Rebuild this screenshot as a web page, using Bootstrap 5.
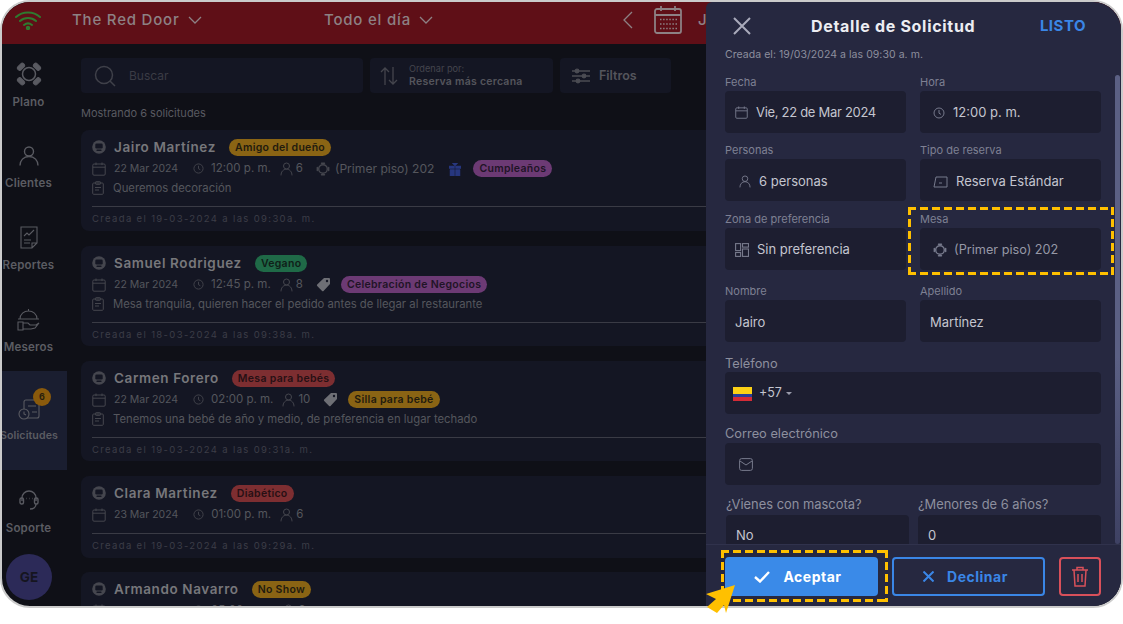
<!DOCTYPE html>
<html lang="es">
<head>
<meta charset="utf-8">
<title>Detalle de Solicitud</title>
<link href="https://cdn.jsdelivr.net/npm/bootstrap@5.3.0/dist/css/bootstrap.min.css" rel="stylesheet">
<style>
html,body{margin:0;background:#fff;font-family:Inter,"Noto Sans",sans-serif;overflow:hidden}
.stage{position:relative;width:1123px;height:624px}
.frame{width:1123px;height:608px;border:2px solid #cbcbcb;border-radius:30px;overflow:hidden;position:relative;background:#0f1017}
.topbar{height:42px;background:#5f0f17;color:#8d8184;font-size:15px;font-weight:500;letter-spacing:.8px;padding-bottom:6px}
.tb-wifi{margin-left:13px;width:57px}
.tb-venue{width:252px}
.tb-when{width:299px}
.tb-cal{margin:0 16px 0 21px}
.shell{height:562px}
.side{width:65px;flex:none}
.side-item{height:81.75px;gap:8px;color:#5b5c62;font-size:11.5px;font-weight:600;letter-spacing:.2px;line-height:14px;position:relative;padding-right:12px}
.side-item svg{color:#595a61}
.side-wide{gap:10px;padding-top:2px}
.side-low{gap:9px;padding-top:2px}
.side-sup{gap:11px;padding-top:2px}
.side-item.is-on{height:99px;background:#1a1e30;white-space:nowrap;padding-right:11px}
.side-item.is-on span.lbl{font-size:10.6px;letter-spacing:.1px}
.side-count{position:absolute;left:31px;top:17px;width:18px;height:18px;border-radius:50%;background:#8a5a0c;color:#2a1f0c;font-size:9px;font-weight:700;line-height:18px;text-align:center}
.avatar{width:46px;height:46px;border-radius:50%;background:#2c2a58;color:#15151f;font-size:13.5px;font-weight:700;margin:2px 0 0 4px}
.main{width:900px;flex:none;padding:14px 0 0 14px;overflow:hidden}
.tool{height:35px;background:#141623;border-radius:4px;color:#54555c;padding-top:1px}
.tool-search{width:282px;padding-left:13px;gap:13px;font-size:12px;color:#3b3c45}
.tool-sort{width:183px;margin-left:7px;padding-left:10px;gap:7px}
.tool-filter{width:111px;margin-left:7px;padding-left:12px;gap:9px;font-size:12.5px;font-weight:600}
.sort-a{font-size:9.2px;line-height:11px;color:#44454d}
.sort-b{font-size:10.5px;line-height:14px;margin-top:1px;font-weight:600;letter-spacing:.25px}
.count-line{font-size:11px;line-height:14px;color:#595a61;margin:13px 0 10px}
.req{width:760px;background:#141623;border-radius:8px;padding:9px 11px 0;margin-bottom:15px}
.req-a{height:101px}.req-b{height:100px}.req-c{height:82px;margin-bottom:14px}.req-d{height:60px}
.req-row{gap:8px;height:16px}
.req-name{font-size:13.5px;line-height:16px;font-weight:600;color:#77777b;letter-spacing:.6px;margin-right:5px}
.pill{font-size:10.5px;line-height:17px;height:17px;border-radius:9px;padding:0 6px;font-weight:600;letter-spacing:.3px;white-space:nowrap}
.pill-amber{background:#8a6414;color:#221b0e}
.pill-green{background:#1f6a47;color:#0f2018}
.pill-purple{background:#6c3a74;color:#1f1426}
.pill-red{background:#7d2e31;color:#271014}
.req-info{height:17px;margin-top:5px;font-size:11px;color:#55565d;line-height:17px;white-space:nowrap}
.req-info svg,.req-note svg{color:#45464e;flex:none}
.req-date{margin:0 15px 0 8px;font-size:10.5px}
.req-time{margin:0 9px 0 7px;font-size:11.5px}
.req-ppl{margin:0 13px 0 3px;font-size:11.5px}
.req-tbl{margin:0 15px 0 5px;font-size:12.1px}
.req-tagi{margin-right:10px;color:#6e6f75!important}
.req-note{height:14px;margin-top:4px;gap:9px;font-size:11.3px;line-height:14px;color:#55565d;white-space:nowrap}
.req-line{border-top:1px solid #3a3b45;margin-top:11px;padding-top:5px;font-size:9.5px;letter-spacing:1.35px;color:#3c3d47;line-height:13px}
.req-c .req-line{margin-top:10px}
.drawer{position:absolute;left:704px;top:0;right:0;bottom:0;background:#262840;border-top-left-radius:6px}
.dw-head{height:42px;padding:6px 35px 0 27px}
.dw-title{font-size:16px;font-weight:700;color:#eceDf2;letter-spacing:.7px;margin-left:60px}
.dw-done{font-size:15px;font-weight:700;color:#3a86e6;letter-spacing:.5px}
.dw-body{height:500px;padding:4px 20px 0 19px;overflow:hidden}
.dw-created{font-size:10.5px;line-height:14px;color:#8d8f9e;letter-spacing:.05px}
.dw-grid{display:grid;grid-template-columns:181px 181px;column-gap:14px}
.dw-label{font-size:11px;line-height:14px;color:#7e8093;margin-bottom:2px}
.gap-r1{margin-top:13px}.gap-r2{margin-top:10px}.gap-r3{margin-top:11px}.gap-r4{margin-top:14px}.gap-r5{margin-top:15px}.gap-r6{margin-top:13px}.gap-r7{margin-top:13px}
.lab-big{font-size:12.8px;color:#8d8f9e}
.lab-tel{margin-bottom:1px}
.dw-field{height:42px;background:#1d1e30;border-radius:4px;padding:1px 0 0 10px;font-size:13px;color:#c4c5cf;white-space:nowrap}
.dw-field svg{color:#777a8c;flex:none}
.dw-inset{padding-left:13px}
.dw-low{padding-top:3px}
.dw-tight{letter-spacing:-.3px}
.dw-muted{font-size:12.7px;color:#9698a6;gap:7px!important}
.flag{width:19px;height:14px;margin-left:-2px;margin-right:7px;background:linear-gradient(#fcd116 0 50%,#2a3e9a 50% 75%,#d52b36 75%)}
.caret-mini{width:0;height:0;border:3px solid transparent;border-top-color:#9a9bab;border-bottom:0;margin-left:4px}
.code-dial{font-size:12.5px}
.tail-grid{display:grid;grid-template-columns:183px 183px;column-gap:9px;margin-left:1px}
.tail-grid .dw-label{margin-bottom:3px;font-size:12.9px;color:#8d8f9e}
.tail-grid .dw-field{padding-top:0;padding-bottom:1px}
.dw-foot{position:absolute;left:0;right:0;bottom:0;height:62px;background:#262840;border-top:1px solid #30324c;padding:12px 20px 0 19px}
.act{height:39px;border-radius:4px;font-size:14px;font-weight:700;gap:13px;letter-spacing:.5px}
.act-ok{width:153px;background:#3a8ae8;color:#fff;padding-right:7px!important}
.act-no{width:153px;margin-left:14px;border:2px solid #3a86e6;color:#3a86e6;background:transparent;padding-right:6px!important}
.act-del{width:42px;margin-left:14px;border:2px solid #d8505a;color:#d8505a;background:transparent}
.dw-scroll{position:absolute;right:1px;top:73px;width:5px;height:469px;border-radius:3px;background:linear-gradient(#5b6084 0 60%,#3e4163)}
.mark-dash{position:absolute;pointer-events:none;
  background:
   repeating-linear-gradient(90deg,#ffc000 0 8px,transparent 8px 12px) left top/100% 3px no-repeat,
   repeating-linear-gradient(90deg,#ffc000 0 8px,transparent 8px 12px) left bottom/100% 3px no-repeat,
   repeating-linear-gradient(180deg,#ffc000 0 8px,transparent 8px 12px) left top/3px 100% no-repeat,
   repeating-linear-gradient(180deg,#ffc000 0 8px,transparent 8px 12px) right top/3px 100% no-repeat}
.mark-table{left:908px;top:207px;width:206px;height:68px}
.mark-accept{left:721px;top:550px;width:167px;height:52px}
.pointer{position:absolute;left:705px;top:584px}
</style>
</head>
<body>
<svg width="0" height="0" class="position-absolute">
<defs>
<symbol id="i-cal" viewBox="0 0 14 14"><g fill="none" stroke="currentColor" stroke-width="1"><rect x=".8" y="2" width="12.4" height="11.2" rx="1.2"/><path d="M.8 5.2h12.4M4 .5v2.6M10 .5v2.6"/></g></symbol>
<symbol id="i-clock" viewBox="0 0 12 12"><g fill="none" stroke="currentColor" stroke-width="1"><circle cx="6" cy="6" r="5"/><path d="M6 3v3.2l2 1.2"/></g></symbol>
<symbol id="i-user" viewBox="0 0 13 14"><g fill="none" stroke="currentColor" stroke-width="1"><circle cx="6.5" cy="4" r="3"/><path d="M1 13.4c0-3.6 2.2-6.2 5.5-6.2s5.500 2.600 5.500 6.200"/></g></symbol>
<symbol id="i-tbl" viewBox="0 0 14 14"><g fill="none" stroke="currentColor" stroke-width="1.400"><circle cx="7" cy="7" r="4.300"/><path d="M5.500 1.300h3M5.500 12.700h3M1.300 5.500v3M12.700 5.500v3" stroke-linecap="round"/></g></symbol>
<symbol id="i-note" viewBox="0 0 12 14"><g fill="none" stroke="currentColor" stroke-width="1"><rect x=".7" y="2" width="10.600" height="11.300" rx="1"/><rect x="3.500" y=".7" width="5" height="2.600" rx=".6"/><path d="M3 6.500h6M3 9h4"/></g></symbol>
<symbol id="i-bus" viewBox="0 0 14 14"><circle cx="7" cy="7" r="6.800" fill="currentColor"/><rect x="3.300" y="3.500" width="7.400" height="5" rx="1.300" fill="#141623"/><rect x="4.500" y="9.500" width="5" height="1.400" rx=".5" fill="#141623"/></symbol>
<symbol id="i-tag" viewBox="0 0 15 15"><path d="M8 1h5a1 1 0 0 1 1 1v5L7.500 14a1 1 0 0 1-1.400 0L1.200 9a1 1 0 0 1 0-1.400z" fill="currentColor"/><circle cx="11" cy="4" r="1.200" fill="#141623"/></symbol>
</defs>
</svg>
<div class="stage">
<div class="frame">
  <div class="topbar d-flex align-items-center">
    <div class="tb-wifi d-flex">
      <svg width="26" height="20" viewBox="0 0 26 20" fill="none" stroke="#2f7a2f" stroke-width="2" stroke-linecap="round"><path d="M1 7C7.500 1 18.500 1 25 7M5 11c4.500-4 11.500-4 16 0M9 15c2.500-2 5.500-2 8 0"/><circle cx="13" cy="18" r="1.200" fill="#2f7a2f"/></svg>
    </div>
    <div class="tb-venue d-flex align-items-center gap-2"><span>The Red Door</span><svg width="14" height="8" viewBox="0 0 14 8" fill="none" stroke="currentColor" stroke-width="1.300"><path d="M1 1l6 6 6-6"/></svg></div>
    <div class="tb-when d-flex align-items-center gap-2"><span>Todo el día</span><svg width="14" height="8" viewBox="0 0 14 8" fill="none" stroke="currentColor" stroke-width="1.300"><path d="M1 1l6 6 6-6"/></svg></div>
    <svg width="10" height="18" viewBox="0 0 10 18" fill="none" stroke="currentColor" stroke-width="1.300"><path d="M9 1 1 9l8 8"/></svg>
    <svg class="tb-cal" width="28" height="28" viewBox="0 0 28 28" fill="none" stroke="currentColor" stroke-width="1.800"><rect x="1" y="3" width="26" height="24" rx="2"/><path d="M1 9h26M7 0v5M21 0v5"/><g stroke-width="1.500" stroke-dasharray="1.500 1.600"><path d="M6 13.500h17M6 18h17M6 22.500h17"/></g></svg>
    <span>J</span>
  </div>
  <div class="shell d-flex">
    <nav class="side d-flex flex-column">
      <a class="side-item d-flex flex-column align-items-center justify-content-center text-decoration-none">
        <svg width="26" height="26" viewBox="0 0 26 26" fill="none" stroke="currentColor" stroke-width="1.500"><circle cx="13" cy="13" r="6.500"/><g fill="currentColor" stroke-width="1"><rect x="1" y="3.500" width="8" height="4.500" rx="2" transform="rotate(-45 5 5.750)"/><rect x="17" y="3.500" width="8" height="4.500" rx="2" transform="rotate(45 21 5.750)"/><rect x="1" y="18" width="8" height="4.500" rx="2" transform="rotate(45 5 20.250)"/><rect x="17" y="18" width="8" height="4.500" rx="2" transform="rotate(-45 21 20.250)"/></g></svg>
        <span class="lbl">Plano</span>
      </a>
      <a class="side-item side-wide d-flex flex-column align-items-center justify-content-center text-decoration-none">
        <svg width="20" height="20" viewBox="0 0 20 20" fill="none" stroke="currentColor" stroke-width="1.400"><circle cx="10" cy="5.500" r="4.500"/><path d="M1 19.500c0-5 3.500-9 9-9s9 4 9 9"/></svg>
        <span class="lbl">Clientes</span>
      </a>
      <a class="side-item side-low d-flex flex-column align-items-center justify-content-center text-decoration-none">
        <svg width="18" height="23" viewBox="0 0 18 23" fill="none" stroke="currentColor" stroke-width="1.100"><path d="M1 1h16v16l-5 5H1zM12 22v-5h5M4 10l3-3 2 2 5-5M4 14h7M4 17h6"/></svg>
        <span class="lbl">Reportes</span>
      </a>
      <a class="side-item side-low d-flex flex-column align-items-center justify-content-center text-decoration-none">
        <svg width="23" height="23" viewBox="0 0 23 23" fill="none" stroke="currentColor" stroke-width="1.100"><path d="M3 11c0-5 4-8 8.500-8S20 6 20 11zM1 11h21M11.500 1v2M1 14h5v8H1zM6 15h5l2 2h6l3-2-4 5-4 1H6"/></svg>
        <span class="lbl">Meseros</span>
      </a>
      <a class="side-item is-on d-flex flex-column align-items-center justify-content-center text-decoration-none">
        <svg width="22" height="22" viewBox="0 0 22 22" fill="none" stroke="currentColor" stroke-width="1.100"><rect x="6" y="1" width="15" height="18" rx="2"/><circle cx="6" cy="15" r="5" fill="#1a1e30"/><path d="M6 12.500V15l2 1M10 7h8M14 13h5"/></svg>
        <span class="side-count">6</span>
        <span class="lbl">Solicitudes</span>
      </a>
      <a class="side-item side-sup d-flex flex-column align-items-center justify-content-center text-decoration-none">
        <svg width="20" height="21" viewBox="0 0 20 21" fill="none" stroke="currentColor" stroke-width="1.400"><path d="M3 12V9a7 7 0 0 1 14 0v3"/><rect x="1" y="9" width="3.500" height="6" rx="1.500"/><rect x="15.500" y="9" width="3.500" height="6" rx="1.500"/><path d="M17 15c0 3-2.500 5-6 5M7 9.500h.5M10 9.500h.5M13 9.500h.5"/></svg>
        <span class="lbl">Soporte</span>
      </a>
      <div class="avatar d-flex align-items-center justify-content-center">GE</div>
    </nav>
    <main class="main">
      <div class="d-flex">
        <div class="tool tool-search d-flex align-items-center">
          <svg width="22" height="22" viewBox="0 0 22 22" fill="none" stroke="#3f4049" stroke-width="1.500"><circle cx="10" cy="10" r="8.500"/><path d="M16 16l5 5"/></svg>
          <span>Buscar</span>
        </div>
        <div class="tool tool-sort d-flex align-items-center">
          <svg width="18" height="20" viewBox="0 0 18 20" fill="none" stroke="#44454d" stroke-width="1.300"><path d="M5 19V2M1 6l4-4 4 4M13 1v17M9 14l4 4 4-4"/></svg>
          <div class="ms-1"><div class="sort-a">Ordenar por:</div><div class="sort-b">Reserva más cercana</div></div>
        </div>
        <div class="tool tool-filter d-flex align-items-center">
          <svg width="18" height="16" viewBox="0 0 18 16" fill="none" stroke="#4b4c53" stroke-width="1.300"><path d="M0 3h18M0 8h18M0 13h18"/><circle cx="5" cy="3" r="1.800" fill="#4b4c53"/><circle cx="12" cy="8" r="1.800" fill="#4b4c53"/><circle cx="6" cy="13" r="1.800" fill="#4b4c53"/></svg>
          <span>Filtros</span>
        </div>
      </div>
      <div class="count-line">Mostrando 6 solicitudes</div>

      <article class="req req-a">
        <div class="req-row d-flex align-items-center"><svg width="14" height="14" color="#45464e"><use href="#i-bus"/></svg><span class="req-name">Jairo Martínez</span><span class="pill pill-amber">Amigo del dueño</span></div>
        <div class="req-info d-flex align-items-center"><svg width="14" height="14"><use href="#i-cal"/></svg><span class="req-date">22 Mar 2024</span><svg width="11" height="11"><use href="#i-clock"/></svg><span class="req-time">12:00 p. m.</span><svg width="13" height="14"><use href="#i-user"/></svg><span class="req-ppl">6</span><svg width="14" height="14"><use href="#i-tbl"/></svg><span class="req-tbl">(Primer piso) 202</span><svg width="12" height="14" viewBox="0 0 12 14" class="me-2"><path d="M0 4h5.500v2.500H0zM6.500 4H12v2.500H6.500zM1 7.500h4.500V14H1zM6.500 7.500H11V14H6.500zM3 1l3 3 3-3" fill="#27377f" stroke="#27377f" stroke-width=".5"/></svg><span class="pill pill-purple ms-1">Cumpleaños</span></div>
        <div class="req-note d-flex align-items-center"><svg width="12" height="14"><use href="#i-note"/></svg><span>Queremos decoración</span></div>
        <div class="req-line">Creada el 19-03-2024 a las 09:30a. m.</div>
      </article>

      <article class="req req-b">
        <div class="req-row d-flex align-items-center"><svg width="14" height="14" color="#45464e"><use href="#i-bus"/></svg><span class="req-name">Samuel Rodriguez</span><span class="pill pill-green">Vegano</span></div>
        <div class="req-info d-flex align-items-center"><svg width="14" height="14"><use href="#i-cal"/></svg><span class="req-date">22 Mar 2024</span><svg width="11" height="11"><use href="#i-clock"/></svg><span class="req-time">12:45 p. m.</span><svg width="13" height="14"><use href="#i-user"/></svg><span class="req-ppl">8</span><svg class="req-tagi" width="15" height="15"><use href="#i-tag"/></svg><span class="pill pill-purple">Celebración de Negocios</span></div>
        <div class="req-note d-flex align-items-center"><svg width="12" height="14"><use href="#i-note"/></svg><span>Mesa tranquila, quieren hacer el pedido antes de llegar al restaurante</span></div>
        <div class="req-line">Creada el 18-03-2024 a las 09:38a. m.</div>
      </article>

      <article class="req req-b">
        <div class="req-row d-flex align-items-center"><svg width="14" height="14" color="#45464e"><use href="#i-bus"/></svg><span class="req-name">Carmen Forero</span><span class="pill pill-red">Mesa para bebés</span></div>
        <div class="req-info d-flex align-items-center"><svg width="14" height="14"><use href="#i-cal"/></svg><span class="req-date">22 Mar 2024</span><svg width="11" height="11"><use href="#i-clock"/></svg><span class="req-time">02:00 p. m.</span><svg width="13" height="14"><use href="#i-user"/></svg><span class="req-ppl">10</span><svg class="req-tagi" width="15" height="15"><use href="#i-tag"/></svg><span class="pill pill-amber">Silla para bebé</span></div>
        <div class="req-note d-flex align-items-center"><svg width="12" height="14"><use href="#i-note"/></svg><span>Tenemos una bebé de año y medio, de preferencia en lugar techado</span></div>
        <div class="req-line">Creada el 19-03-2024 a las 09:31a. m.</div>
      </article>

      <article class="req req-c">
        <div class="req-row d-flex align-items-center"><svg width="14" height="14" color="#45464e"><use href="#i-bus"/></svg><span class="req-name">Clara Martinez</span><span class="pill pill-red">Diabético</span></div>
        <div class="req-info d-flex align-items-center"><svg width="14" height="14"><use href="#i-cal"/></svg><span class="req-date">23 Mar 2024</span><svg width="11" height="11"><use href="#i-clock"/></svg><span class="req-time">01:00 p. m.</span><svg width="13" height="14"><use href="#i-user"/></svg><span class="req-ppl">6</span></div>
        <div class="req-line">Creada el 19-03-2024 a las 09:29a. m.</div>
      </article>

      <article class="req req-d">
        <div class="req-row d-flex align-items-center"><svg width="14" height="14" color="#45464e"><use href="#i-bus"/></svg><span class="req-name">Armando Navarro</span><span class="pill pill-amber">No Show</span></div>
        <div class="req-info d-flex align-items-center"><svg width="14" height="14"><use href="#i-cal"/></svg><span class="req-date">25 Mar 2024</span><svg width="11" height="11"><use href="#i-clock"/></svg><span class="req-time">05:00 p. m.</span><svg width="13" height="14"><use href="#i-user"/></svg><span class="req-ppl">6</span></div>
      </article>
    </main>
  </div>

  <aside class="drawer d-flex flex-column">
    <div class="dw-head d-flex align-items-center">
      <svg width="18" height="18" viewBox="0 0 18 18" fill="none" stroke="#a9abbb" stroke-width="2"><path d="M1 1l16 16M17 1 1 17"/></svg>
      <span class="dw-title">Detalle de Solicitud</span>
      <span class="dw-done ms-auto">LISTO</span>
    </div>
    <div class="dw-body">
      <div class="dw-created">Creada el: 19/03/2024 a las 09:30 a. m.</div>
      <div class="dw-grid gap-r1">
        <div><div class="dw-label">Fecha</div><div class="dw-field dw-tight d-flex align-items-center gap-2"><svg width="13" height="13"><use href="#i-cal"/></svg><span>Vie, 22 de Mar 2024</span></div></div>
        <div><div class="dw-label">Hora</div><div class="dw-field dw-inset d-flex align-items-center gap-2"><svg width="12" height="12"><use href="#i-clock"/></svg><span>12:00 p. m.</span></div></div>
      </div>
      <div class="dw-grid gap-r2">
        <div><div class="dw-label">Personas</div><div class="dw-field dw-low d-flex align-items-center gap-2"><svg class="ms-1" width="12" height="13"><use href="#i-user"/></svg><span>6 personas</span></div></div>
        <div><div class="dw-label">Tipo de reserva</div><div class="dw-field dw-inset dw-low d-flex align-items-center gap-2"><svg width="15" height="12" viewBox="0 0 15 12" fill="none" stroke="currentColor" stroke-width="1"><path d="M3 1h11v10H1zM6 7h3"/></svg><span>Reserva Estándar</span></div></div>
      </div>
      <div class="dw-grid gap-r3">
        <div><div class="dw-label">Zona de preferencia</div><div class="dw-field d-flex align-items-center gap-2"><svg width="14" height="14" viewBox="0 0 14 14" fill="none" stroke="currentColor" stroke-width="1.100"><rect x=".6" y=".6" width="5" height="7"/><rect x="7.500" y=".6" width="6" height="3.500"/><rect x=".6" y="9.500" width="5" height="3.900"/><rect x="7.500" y="6" width="6" height="7.400"/></svg><span>Sin preferencia</span></div></div>
        <div><div class="dw-label">Mesa</div><div class="dw-field dw-inset dw-muted d-flex align-items-center"><svg width="14" height="14"><use href="#i-tbl"/></svg><span>(Primer piso) 202</span></div></div>
      </div>
      <div class="dw-grid gap-r4">
        <div><div class="dw-label">Nombre</div><div class="dw-field dw-low d-flex align-items-center"><span>Jairo</span></div></div>
        <div><div class="dw-label">Apellido</div><div class="dw-field dw-low d-flex align-items-center"><span>Martínez</span></div></div>
      </div>
      <div class="gap-r5"><div class="dw-label lab-big lab-tel">Teléfono</div>
        <div class="dw-field d-flex align-items-center"><span class="flag"></span><span class="code-dial">+57</span><span class="caret-mini"></span></div></div>
      <div class="gap-r6"><div class="dw-label lab-big">Correo electrónico</div>
        <div class="dw-field d-flex align-items-center"><svg class="ms-1" width="14" height="13" viewBox="0 0 14 13" fill="none" stroke="currentColor" stroke-width="1"><rect x=".6" y=".6" width="12.800" height="11.800" rx="2"/><path d="M1 3l6 4 6-4"/></svg></div></div>
      <div class="tail-grid gap-r7">
        <div><div class="dw-label">¿Vienes con mascota?</div><div class="dw-field d-flex align-items-center"><span>No</span></div></div>
        <div><div class="dw-label">¿Menores de 6 años?</div><div class="dw-field d-flex align-items-center"><span>0</span></div></div>
      </div>
    </div>
    <div class="dw-scroll"></div>
    <div class="dw-foot d-flex align-items-start">
      <button class="btn act act-ok d-flex align-items-center justify-content-center p-0"><svg width="16" height="12" viewBox="0 0 16 12" fill="none" stroke="#fff" stroke-width="2.400"><path d="M1 6l5 4.500L15 1"/></svg><span>Aceptar</span></button>
      <button class="btn act act-no d-flex align-items-center justify-content-center p-0"><svg width="11" height="11" viewBox="0 0 11 11" fill="none" stroke="#3a86e6" stroke-width="2"><path d="M.5.500l10 10M10.500.500l-10 10"/></svg><span>Declinar</span></button>
      <button class="btn act act-del d-flex align-items-center justify-content-center p-0" aria-label="Eliminar"><svg width="16" height="21" viewBox="0 0 16 21" fill="none" stroke="#d8505a" stroke-width="1.500"><path d="M0 4h16M5 4V1.500h6V4M2 4l1 16h10l1-16M6 8v8M10 8v8"/></svg></button>
    </div>
  </aside>
</div>
<div class="mark-dash mark-table"></div>
<div class="mark-dash mark-accept"></div>
<svg class="pointer" width="31" height="30" viewBox="0 0 31 30"><path d="M30 1 1 10l10 5-9 8 10 6 7-8 2 8z" fill="#ffc000"/></svg>
</div>
<script src="https://cdn.jsdelivr.net/npm/bootstrap@5.3.0/dist/js/bootstrap.bundle.min.js"></script>
</body>
</html>
